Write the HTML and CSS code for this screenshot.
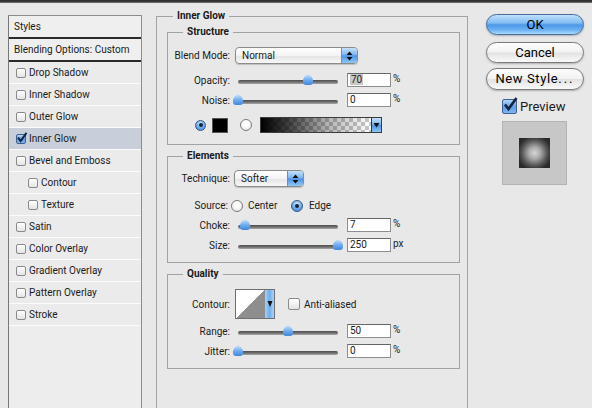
FILE: index.html
```html
<!DOCTYPE html>
<html>
<head>
<meta charset="utf-8">
<link rel="stylesheet" href="styles.css">
</head>
<body>
<div class="topbar"></div>
<div class="main">
  <div class="styles-list">
    <div class="list-head">Styles</div>
    <div class="list-head">Blending Options: Custom</div>
    <div class="item"><span class="cb"></span>Drop Shadow</div>
    <div class="item"><span class="cb"></span>Inner Shadow</div>
    <div class="item"><span class="cb"></span>Outer Glow</div>
    <div class="item sel"><span class="cb on"><svg width="12" height="12" viewBox="0 0 12 12"><path d="M2 5.5 L4.6 9 L10.5 0.8" fill="none" stroke="#14233f" stroke-width="2"/></svg></span>Inner Glow</div>
    <div class="item"><span class="cb"></span>Bevel and Emboss</div>
    <div class="item sub"><span class="cb"></span>Contour</div>
    <div class="item sub"><span class="cb"></span>Texture</div>
    <div class="item"><span class="cb"></span>Satin</div>
    <div class="item"><span class="cb"></span>Color Overlay</div>
    <div class="item"><span class="cb"></span>Gradient Overlay</div>
    <div class="item"><span class="cb"></span>Pattern Overlay</div>
    <div class="item"><span class="cb"></span>Stroke</div>
    <div class="list-rest"></div>
  </div>

  <div class="content">
    <div class="group outer">
      <div class="gtitle outer-title">Inner Glow</div>

      <div class="group g-structure">
        <div class="gtitle">Structure</div>
        <div class="row r-blend">
          <span class="label">Blend Mode:</span>
          <div class="popup blend-popup">
            <span class="popup-text">Normal</span>
            <span class="popup-arrow"><svg width="7" height="10" viewBox="0 0 7 10"><path d="M3.5 0.5 L6.5 4 L0.5 4 Z M0.5 6 L6.5 6 L3.5 9.5 Z" fill="#111"/></svg></span>
          </div>
        </div>
        <div class="row r-val r-opacity">
          <span class="label">Opacity:</span>
          <div class="slider"><div class="track"><span class="thumb" style="left:70%"></span></div></div>
          <span class="field"><span class="selected">70</span></span>
          <span class="unit">%</span>
        </div>
        <div class="row r-val r-noise">
          <span class="label">Noise:</span>
          <div class="slider"><div class="track"><span class="thumb" style="left:0%"></span></div></div>
          <span class="field">0</span>
          <span class="unit">%</span>
        </div>
        <div class="row r-color">
          <span class="radio on"></span>
          <span class="swatch"></span>
          <span class="radio r2"></span>
          <div class="gradbar">
            <span class="grad"></span>
            <span class="grad-arrow"><svg width="7" height="6" viewBox="0 0 7 6"><path d="M0.5 1 L6.5 1 L3.5 5.5 Z" fill="#111"/></svg></span>
          </div>
        </div>
      </div>

      <div class="group g-elements">
        <div class="gtitle">Elements</div>
        <div class="row r-tech">
          <span class="label">Technique:</span>
          <div class="popup tech-popup">
            <span class="popup-text">Softer</span>
            <span class="popup-arrow"><svg width="7" height="10" viewBox="0 0 7 10"><path d="M3.5 0.5 L6.5 4 L0.5 4 Z M0.5 6 L6.5 6 L3.5 9.5 Z" fill="#111"/></svg></span>
          </div>
        </div>
        <div class="row r-source">
          <span class="label src-label">Source:</span>
          <span class="radio"></span>
          <span class="opt center-opt">Center</span>
          <span class="radio on"></span>
          <span class="opt edge-opt">Edge</span>
        </div>
        <div class="row r-val r-choke">
          <span class="label">Choke:</span>
          <div class="slider"><div class="track"><span class="thumb" style="left:7%"></span></div></div>
          <span class="field">7</span>
          <span class="unit">%</span>
        </div>
        <div class="row r-val r-size">
          <span class="label">Size:</span>
          <div class="slider"><div class="track"><span class="thumb" style="left:100%"></span></div></div>
          <span class="field">250</span>
          <span class="unit">px</span>
        </div>
      </div>

      <div class="group g-quality">
        <div class="gtitle">Quality</div>
        <div class="row r-contour">
          <span class="label">Contour:</span>
          <div class="contour">
            <span class="contour-img"></span>
            <span class="contour-arrow"><svg width="6" height="8" viewBox="0 0 6 8"><path d="M0.5 1 L5.5 1 L3 7 Z" fill="#111"/></svg></span>
          </div>
          <span class="cbox"></span>
          <span class="opt aa">Anti-aliased</span>
        </div>
        <div class="row r-val r-range">
          <span class="label">Range:</span>
          <div class="slider"><div class="track"><span class="thumb" style="left:50%"></span></div></div>
          <span class="field">50</span>
          <span class="unit">%</span>
        </div>
        <div class="row r-val r-jitter">
          <span class="label">Jitter:</span>
          <div class="slider"><div class="track"><span class="thumb" style="left:0%"></span></div></div>
          <span class="field">0</span>
          <span class="unit">%</span>
        </div>
      </div>
    </div>
  </div>

  <div class="side">
    <div class="btn ok">OK</div>
    <div class="btn cancel">Cancel</div>
    <div class="btn newstyle">New Style<span class="dots">...</span></div>
    <div class="preview-row">
      <span class="pcb"><svg width="16" height="16" viewBox="0 0 16 16"><path d="M3 7.5 L6.5 12 L14.5 1" fill="none" stroke="#14233f" stroke-width="2.6"/></svg></span>
      <span class="ptext">Preview</span>
    </div>
    <div class="preview-box"><div class="preview-square"></div></div>
  </div>
</div>
</body>
</html>
```

FILE: styles.css
```css
* { box-sizing: border-box; }
html, body { margin: 0; padding: 0; }
body {
  width: 592px;
  height: 408px;
  overflow: hidden;
  background: #e8e8e8;
  font-family: Roboto, "Liberation Sans", sans-serif;
  font-size: 10px;
  color: #1a1a1a;
}
.topbar {
  height: 3px;
  background: linear-gradient(#2e2e2e, #3a3a3a 60%, #8a8a8a);
}
.main {
  display: flex;
  align-items: flex-start;
  padding-top: 12px;
  height: 405px;
  overflow: hidden;
}

/* ---------- styles list ---------- */
.styles-list {
  margin-left: 8px;
  width: 134px;
  height: 393px;
  border: 1px solid #8c8c8c;
  border-left-color: #777;
  border-bottom: none;
  background: #ededed;
  display: flex;
  flex-direction: column;
}
.list-head {
  height: 23px;
  padding-left: 5px;
  line-height: 21px;
  border-bottom: 2px solid #2a2a2a;
  background: #efefef;
}
.item {
  height: 22px;
  border-bottom: 1px solid #fbfbfb;
  background: #ebebeb;
  display: flex;
  align-items: center;
  padding-left: 7px;
}
.item.sub { padding-left: 19px; }
.item.sel { background: #c8cfdb; }
.cb {
  width: 10px;
  height: 10px;
  margin-right: 3px;
  border: 1px solid #8a8a8a;
  border-radius: 2px;
  background: linear-gradient(#ffffff, #e4e4e4);
  position: relative;
  flex: none;
}
.cb.on {
  background: linear-gradient(#b3d5f6, #5e9de4 55%, #7fb8f0);
  border-color: #3d5f92;
}
.cb.on svg { position: absolute; left: -1px; top: -3px; }
.list-rest { flex: 1; background: #ededed; }

/* ---------- groups ---------- */
.content { margin-left: 14px; }
.group {
  position: relative;
  border: 1px solid #a2a2a2;
}
.gtitle {
  position: absolute;
  top: -7px;
  left: 15px;
  padding: 0 4px;
  line-height: 12px;
  background: #e8e8e8;
  font-weight: bold;
}
.outer-title { left: 16px; }
.outer {
  width: 312px;
  height: 392px;
  margin-top: 1px;
  padding: 15px 7px 0 10px;
  border-bottom: none;
  display: flex;
  flex-direction: column;
  gap: 11px;
}
.g-structure { width: 293px; height: 113px; padding-top: 14px; }
.g-elements { width: 293px; height: 107px; padding-top: 13px; }
.g-quality { width: 293px; height: 95px; padding-top: 14px; }

.row { display: flex; align-items: center; }
.label {
  width: 62px;
  text-align: right;
  flex: none;
}
.r-blend { height: 17px; }
.r-opacity { margin-top: 9px; }
.r-noise { margin-top: 6px; }
.r-color { height: 16px; margin-top: 10px; padding-left: 27px; }
.r-tech { height: 17px; }
.r-source { height: 13px; margin-top: 12px; }
.r-choke { margin-top: 6px; }
.r-size { margin-top: 6px; }
.r-contour { height: 30px; }
.r-range { margin-top: 5px; }
.r-jitter { margin-top: 6px; }
.r-val { height: 14px; }

/* popup buttons */
.popup {
  display: flex;
  height: 17px;
  border: 1px solid #8b8b8b;
  border-radius: 4px;
  background: linear-gradient(#ffffff, #f3f3f3 50%, #e4e4e4 52%, #f7f7f7);
  box-shadow: 0 1px 1px rgba(0,0,0,0.18);
  overflow: hidden;
}
.blend-popup { margin-left: 5px; width: 123px; }
.tech-popup { margin-left: 4px; width: 70px; }
.popup-text { flex: 1; padding-left: 6px; line-height: 15px; }
.popup-arrow {
  width: 16px;
  border-left: 1px solid #6a8ec0;
  background: linear-gradient(#c4e0fa, #7fb6ee 45%, #4e93e2 52%, #8fc6f7);
  display: flex;
  align-items: center;
  justify-content: center;
}

/* sliders */
.slider {
  margin-left: 3px;
  width: 110px;
  height: 14px;
  padding: 7px 5px 0;
  flex: none;
}
.track {
  position: relative;
  height: 4px;
  border-radius: 2px;
  background: linear-gradient(#4e4e4e, #6f6f6f 50%, #a9a9a9);
}
.thumb {
  position: absolute;
  bottom: -1px;
  width: 10px;
  height: 11px;
  margin-left: -5px;
  background: linear-gradient(#d3e8fc, #76b0ef 50%, #3f86dd);
  clip-path: polygon(50% 0, 85% 25%, 100% 50%, 100% 100%, 0 100%, 0 50%, 15% 25%);
  border-radius: 0 0 3px 3px;
}
.field {
  margin-left: 4px;
  width: 44px;
  height: 14px;
  border: 1px solid #8e8e8e;
  border-top-color: #666;
  background: #fff;
  padding-left: 2px;
  line-height: 12px;
  flex: none;
}
.selected { background: #c9c9c9; padding: 0 1px; }
.unit {
  margin-left: 2px;
  align-self: flex-start;
  line-height: 11px;
}

/* radios */
.radio {
  width: 12px;
  height: 12px;
  border-radius: 50%;
  border: 1px solid #7a7a7a;
  background: radial-gradient(circle at 50% 35%, #ffffff 30%, #dcdcdc);
  flex: none;
  position: relative;
}
.radio.on {
  border-color: #34588a;
  background: radial-gradient(circle at 50% 30%, #cfe6fb, #6ba9ea 55%, #3c7fd4);
}
.radio.on::after {
  content: "";
  position: absolute;
  left: 3px;
  top: 3px;
  width: 4px;
  height: 4px;
  border-radius: 50%;
  background: #15223b;
}
.r-color .radio.on { width: 11px; height: 11px; }
.r-color .radio.on::after { left: 2.5px; top: 2.5px; }
.swatch {
  margin-left: 6px;
  width: 16px;
  height: 15px;
  background: #000;
  border: 1px solid #555;
  flex: none;
}
.radio.r2 { margin-left: 12px; }
.gradbar {
  margin-left: 8px;
  display: flex;
  height: 16px;
  border: 1px solid #3c3c3c;
}
.grad {
  width: 110px;
  background:
    linear-gradient(to right, #000 0%, rgba(0,0,0,0.75) 25%, rgba(0,0,0,0.3) 60%, rgba(0,0,0,0) 100%),
    repeating-conic-gradient(#ffffff 0 25%, #c9c9c9 0 50%) 0 0 / 8px 8px;
}
.grad-arrow {
  width: 10px;
  background: linear-gradient(#c4e0fa, #7fb6ee 45%, #4e93e2 52%, #8fc6f7);
  display: flex;
  align-items: center;
  justify-content: center;
  border-left: 1px solid #333;
}

/* source row */
.src-label { width: 60px; }
.r-source .radio { margin-left: 3px; }
.opt { flex: none; }
.center-opt { margin-left: 5px; width: 43px; }
.r-source .radio.on { margin-left: 0; }
.edge-opt { margin-left: 6px; }

/* contour */
.contour {
  margin-left: 5px;
  width: 40px;
  height: 30px;
  display: flex;
  border: 1px solid #6f6f6f;
  flex: none;
}
.contour-img {
  width: 29px;
  background: linear-gradient(to bottom right, #ffffff 50%, #8e8e8e 50%);
}
.contour-arrow {
  flex: 1;
  background: linear-gradient(to right, #a6cff5, #6fb0ee 50%, #a9d4f8);
  display: flex;
  align-items: center;
  justify-content: center;
}
.cbox {
  margin-left: 13px;
  width: 12px;
  height: 12px;
  border: 1px solid #8a8a8a;
  border-radius: 2px;
  background: linear-gradient(#ffffff, #e2e2e2);
  flex: none;
}
.aa { margin-left: 4px; }

/* ---------- side ---------- */
.side {
  margin-left: 18px;
  margin-top: -1px;
  width: 98px;
  display: flex;
  flex-direction: column;
}
.btn {
  height: 21px;
  border-radius: 11px;
  border: 1px solid #7b7b7b;
  background: linear-gradient(#fdfdfd, #f2f2f2 48%, #e2e2e2 52%, #f9f9f9);
  box-shadow: 0 1px 2px rgba(0,0,0,0.25);
  text-align: center;
  line-height: 19px;
  font-size: 13px;
  color: #000;
}
.ok {
  background: linear-gradient(#c0e0fb, #82bdf3 42%, #4d96e7 52%, #6fb3f5 80%, #aadcfc);
  border-color: #4a6d9e;
}
.cancel { margin-top: 7px; }
.newstyle { margin-top: 5px; height: 22px; letter-spacing: 0.6px; }
.dots { letter-spacing: 2px; }
.preview-row {
  margin-top: 8px;
  height: 16px;
  display: flex;
  align-items: center;
  padding-left: 16px;
}
.pcb {
  width: 15px;
  height: 15px;
  border: 1px solid #3d5f92;
  border-radius: 2px;
  background: linear-gradient(#b3d5f6, #5e9de4 55%, #7fb8f0);
  position: relative;
  flex: none;
}
.pcb svg { position: absolute; left: -1px; top: -3px; }
.ptext { margin-left: 3px; font-size: 13px; }
.preview-box {
  margin-top: 7px;
  margin-left: 16px;
  width: 65px;
  height: 64px;
  background: #c7c7c7;
  border: 1px solid #b3b3b3;
  padding: 16px 0 0 16px;
}
.preview-square {
  width: 31px;
  height: 30px;
  background: radial-gradient(circle at 50% 50%, #d6d6d6 0%, #a8a8a8 28%, #575757 58%, #2a2a2a 80%);
}
```
